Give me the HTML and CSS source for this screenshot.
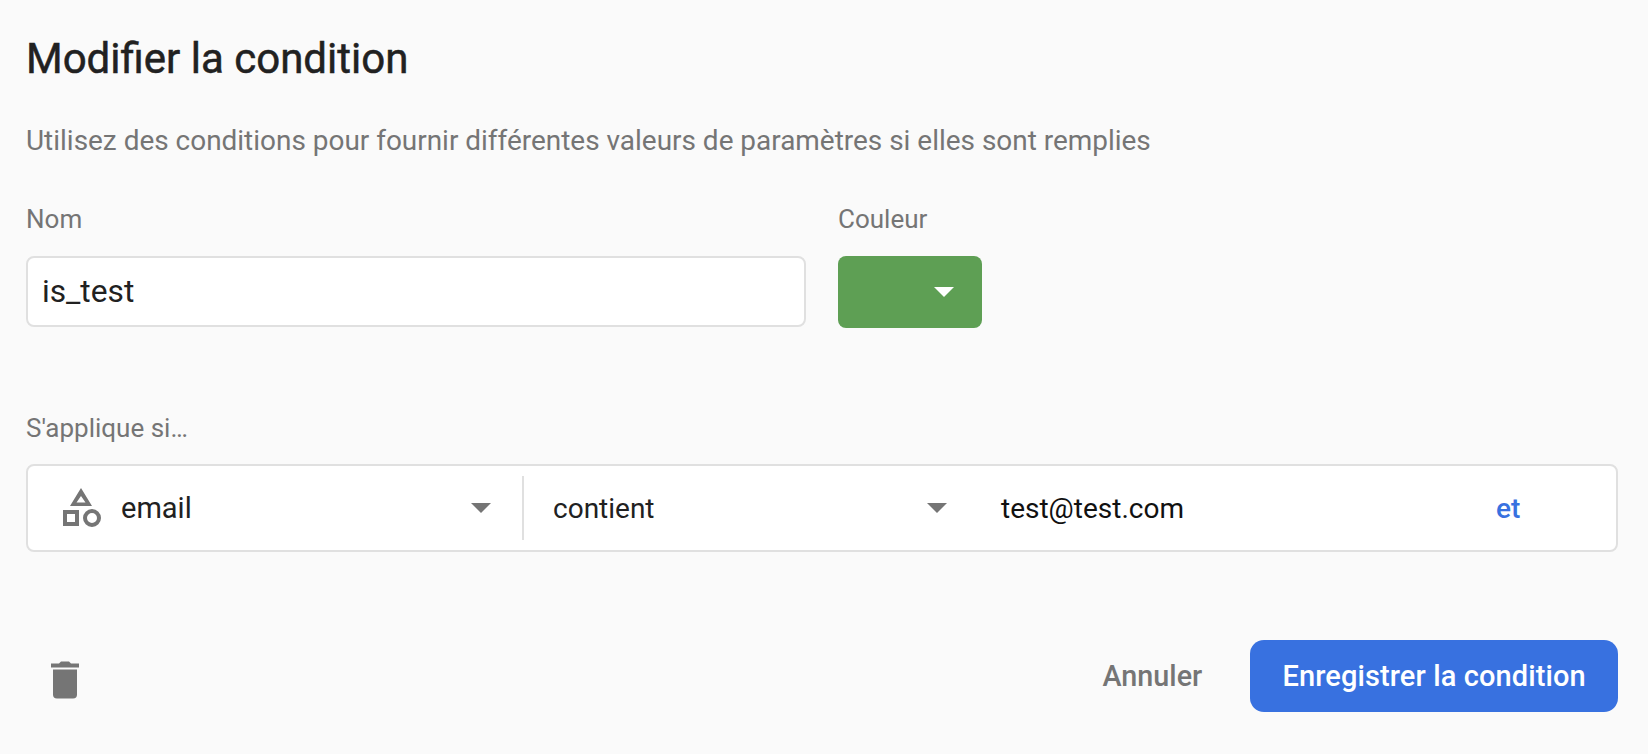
FILE: index.html
```html
<!DOCTYPE html>
<html lang="fr">
<head>
  <meta charset="UTF-8" />
  <title>Modifier la condition</title>
  <meta name="viewport" content="width=device-width, initial-scale=1.0" />
  <link rel="stylesheet" href="styles.css">
</head>
<body>
<div class="dialog">
  <h1 class="title">Modifier la condition</h1>
  <p class="subtitle">Utilisez des conditions pour fournir différentes valeurs de paramètres si elles sont remplies</p>

  <div class="name-row">
    <div class="name-col">
      <div class="label">Nom</div>
      <div class="field">is_test</div>
    </div>
    <div class="color-col">
      <div class="label">Couleur</div>
      <div class="swatch"><span class="arrow arrow-white"></span></div>
    </div>
  </div>

  <div class="label applies-label">S'applique si…</div>
  <div class="rule">
    <div class="rule-type">
      <svg class="shapes-icon" width="40" height="40" viewBox="0 0 40 40">
        <path fill-rule="evenodd" fill="#757575" d="M18 0 L29 18 L7 18 Z M18 8 L13.5 14.5 L22.5 14.5 Z" />
        <path fill-rule="evenodd" fill="#757575" d="M0 22 H16 V38 H0 Z M4 26 V34 H12 V26 Z" />
        <circle cx="29" cy="30" r="7" fill="none" stroke="#757575" stroke-width="4" />
      </svg>
      <span class="rule-text">email</span>
      <span class="arrow"></span>
    </div>
    <div class="rule-op">
      <span class="rule-text">contient</span>
      <span class="arrow"></span>
    </div>
    <div class="rule-value">test@test.com</div>
    <div class="rule-and">et</div>
  </div>

  <div class="footer">
    <svg class="trash-icon" width="28" height="38" viewBox="0 0 28 38">
      <path fill="#757575" d="M0 2.5 H8 L10 0.5 H18 L20 2.5 H28 V6.5 H0 Z" />
      <path fill="#757575" d="M2 8.5 H26 V33.5 A4 4 0 0 1 22 37.5 H6 A4 4 0 0 1 2 33.5 Z" />
    </svg>
    <div class="actions">
      <span class="cancel">Annuler</span>
      <span class="save">Enregistrer la condition</span>
    </div>
  </div>
</div>
</body>
</html>
```

FILE: styles.css
```css
* {
  box-sizing: border-box;
}
html, body {
  margin: 0;
  height: 100%;
  overflow: hidden;
}
body {
  font-family: Roboto, Arial, sans-serif;
  background: #fafafa;
  color: #212121;
}
.dialog {
  padding: 35px 30px 0 26px;
}
.title {
  margin: 0;
  font-family: Roboto, Arial, sans-serif;
  font-size: 42px;
  line-height: 48px;
  font-weight: 400;
  -webkit-text-stroke: 0.5px #212121;
}
.subtitle {
  margin: 40px 0 0;
  font-size: 27.95px;
  line-height: 36px;
  color: #757575;
}
.name-row {
  display: flex;
  gap: 32px;
  margin-top: 44px;
}
.name-col {
  width: 780px;
}
.color-col {
  width: 144px;
}
.label {
  font-size: 26px;
  line-height: 32px;
  color: #757575;
  margin-bottom: 21px;
}
.field {
  height: 71px;
  padding: 0 14px;
  background: #fff;
  border: 2px solid #e0e0e0;
  border-radius: 8px;
  font-size: 31.7px;
  line-height: 67px;
}
.swatch {
  display: flex;
  align-items: center;
  justify-content: flex-end;
  height: 72px;
  padding-right: 28px;
  background: #5e9f54;
  border-radius: 8px;
}
.arrow {
  width: 0;
  height: 0;
  border-left: 10px solid transparent;
  border-right: 10px solid transparent;
  border-top: 10px solid #757575;
}
.arrow-white {
  border-top-color: #fff;
}
.applies-label {
  margin: 84px 0 20px;
}
.rule {
  display: flex;
  align-items: center;
  height: 88px;
  background: #fff;
  border: 2px solid #e0e0e0;
  border-radius: 8px;
  font-size: 28px;
}
.rule-type {
  display: flex;
  align-items: center;
  width: 496px;
  height: 64px;
  padding: 0 31px 0 35px;
  border-right: 2px solid #e0e0e0;
}
.shapes-icon {
  flex: none;
  margin-right: 18px;
}
.rule-text {
  flex: 1;
}
.rule-type .rule-text {
  font-size: 29px;
}
.rule-op {
  display: flex;
  align-items: center;
  width: 451px;
  padding: 0 28px 0 29px;
}
.rule-value {
  width: 521px;
  padding-left: 26px;
  color: #111;
}
.rule-and {
  color: #3871e0;
  font-weight: 500;
}
.footer {
  display: flex;
  align-items: center;
  justify-content: space-between;
  margin-top: 88px;
  padding-left: 25px;
}
.trash-icon {
  margin-top: 8px;
}
.actions {
  display: flex;
  align-items: center;
  gap: 48px;
}
.cancel {
  font-size: 28.75px;
  font-weight: 500;
  color: #757575;
}
.save {
  display: block;
  height: 72px;
  padding: 0 32.3px;
  background: #3871e0;
  border-radius: 14px;
  color: #fff;
  font-size: 29px;
  font-weight: 500;
  letter-spacing: 0.1px;
  line-height: 72px;
}
```
